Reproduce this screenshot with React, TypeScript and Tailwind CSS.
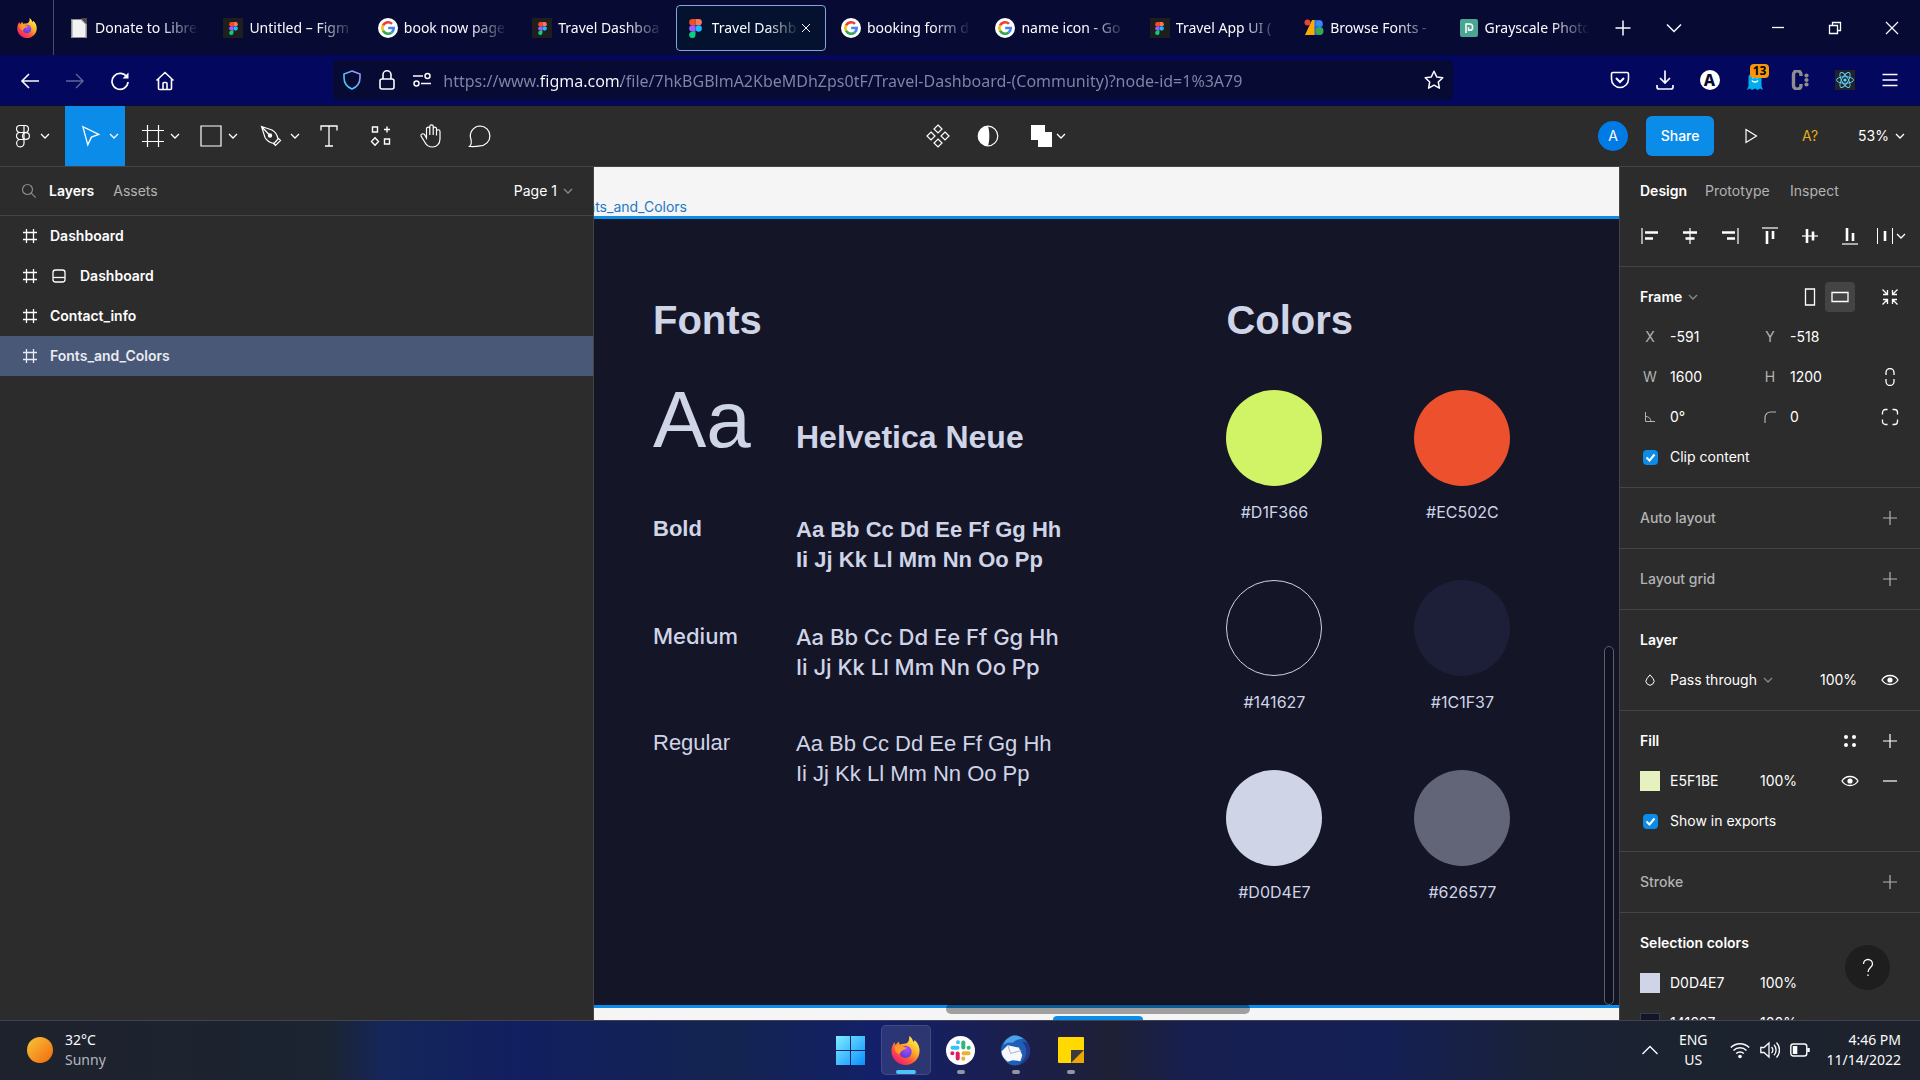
import type { ReactNode } from "react";

type IconProps = { className?: string; children?: ReactNode; box?: number; sw?: number };

function Svg({ className = "size-5", children, box = 20, sw = 1 }: IconProps) {
  return (
    <svg
      viewBox={`0 0 ${box} ${box}`}
      className={`shrink-0 ${className}`}
      fill="none"
      stroke="currentColor"
      strokeWidth={sw}
      aria-hidden="true"
    >
      {children}
    </svg>
  );
}

function Chevron({ className = "" }: { className?: string }) {
  return (
    <svg viewBox="0 0 10 10" className={`size-[10px] shrink-0 ${className}`} fill="none" stroke="currentColor" strokeWidth="1.3" aria-hidden="true">
      <path d="M1 3l4 4 4-4" />
    </svg>
  );
}

/* ---------- brand marks ---------- */

function FirefoxLogo({ className, id }: { className: string; id: string }) {
  return (
    <svg viewBox="0 0 32 32" className={`shrink-0 ${className}`} aria-hidden="true">
      <defs>
        <linearGradient id={`${id}-a`} x1="0.85" y1="0.1" x2="0.2" y2="0.95">
          <stop offset="0" stopColor="#fff04a" />
          <stop offset="0.35" stopColor="#ffb02a" />
          <stop offset="0.65" stopColor="#ff5a36" />
          <stop offset="1" stopColor="#f0187a" />
        </linearGradient>
        <radialGradient id={`${id}-b`} cx="0.6" cy="0.3" r="0.8">
          <stop offset="0" stopColor="#b04cff" />
          <stop offset="1" stopColor="#4a3bd0" />
        </radialGradient>
      </defs>
      <path
        fill={`url(#${id}-a)`}
        d="M20 0c3 2 4 4 4.500 6.500 1-.5 1.500-1 1.500-2C30 8 32 13 31.500 17.500 31 26 24 32 16 32S1 26 .5 17.500C.2 13 1.500 9.500 4 6.500c0 1.500.3 2.300 1 3.200C6.500 8 7.500 7 9 6c-.2 1.500 0 2.500.8 3.300C13 8.500 16 9 18 7.500 19.800 6 20.500 3 20 0z"
      />
      <circle cx="16" cy="17.500" r="6.800" fill={`url(#${id}-b)`} />
      <path fill="#ff9a2a" d="M4 12c3-2.500 7-2.500 9.500-.5 1.500 1 3 .8 4 1.200-.5 1.800-3 2.300-4.500 3-1.500.8-3 2.500-3.500 4.500C6 19 3.500 16 4 12z" />
    </svg>
  );
}

function FigmaLogo({ dark = false }: { dark?: boolean }) {
  return (
    <span className={dark ? "flex size-5 shrink-0 items-center justify-center bg-[#1e1e1e]" : "flex size-5 shrink-0 items-center justify-center"}>
      <svg viewBox="0 0 12 18" className={dark ? "h-[13px] w-[9px]" : "h-[19px] w-[13px]"} aria-hidden="true">
        <path fill="#f24e1e" d="M3 0h3v6H3a3 3 0 010-6z" />
        <path fill="#ff7262" d="M6 0h3a3 3 0 010 6H6z" />
        <path fill="#a259ff" d="M3 6h3v6H3a3 3 0 010-6z" />
        <circle cx="9" cy="9" r="3" fill="#1abcfe" />
        <path fill="#0acf83" d="M3 12h3v3a3 3 0 11-3-3z" />
      </svg>
    </span>
  );
}

function GoogleLogo() {
  return (
    <svg viewBox="0 0 20 20" className="size-5 shrink-0" fill="none" strokeWidth="2.600" aria-hidden="true">
      <circle cx="10" cy="10" r="10" fill="#fff" />
      <path stroke="#ea4335" d="M5 7.300A5.700 5.700 0 0114 5.900" />
      <path stroke="#fbbc05" d="M5 12.700a5.700 5.700 0 010-5.400" />
      <path stroke="#34a853" d="M13.700 14.400A5.700 5.700 0 015 12.700" />
      <path stroke="#4285f4" d="M10.200 10h5.500a5.700 5.700 0 01-2 4.400" />
    </svg>
  );
}

function FileLogo() {
  return (
    <svg viewBox="0 0 20 20" className="size-5 shrink-0" aria-hidden="true">
      <path d="M2 1h11l5 5v14H2z" fill="#8f8f8f" />
      <path d="M3.500 2H12l4.500 4.500V19h-13z" fill="#f2f2f2" />
      <path d="M12 0h6v6z" fill="#4a4a4a" />
    </svg>
  );
}

function FontsLogo() {
  return (
    <svg viewBox="0 0 20 20" className="size-5 shrink-0" aria-hidden="true">
      <path d="M8 2h4v15H1z" fill="#fbab00" />
      <path d="M10.500 2H15a4 4 0 010 8h-4.500z" fill="#1a73e8" />
      <path d="M10.500 9H15a4 4 0 010 8h-4.500z" fill="#1967d2" />
      <circle cx="15.500" cy="13" r="4" fill="#34a853" />
      <circle cx="3.500" cy="4.500" r="3" fill="#ea4335" />
      <circle cx="15" cy="5.500" r="3" fill="#4285f4" />
    </svg>
  );
}

function PhotopeaLogo() {
  return (
    <svg viewBox="0 0 20 20" className="size-5 shrink-0" fill="none" aria-hidden="true">
      <rect x="1" y="1" width="18" height="18" rx="2" fill="#4aa592" />
      <path d="M7 15V6h3.500a3 3 0 010 6.300H9.500v-3" stroke="#fff" strokeWidth="1.500" />
    </svg>
  );
}

/* ---------- browser chrome ---------- */

const tabs: { title: string; icon: ReactNode; active?: boolean }[] = [
  { title: "Donate to Libre", icon: <FileLogo /> },
  { title: "Untitled – Figm", icon: <FigmaLogo dark /> },
  { title: "book now page", icon: <GoogleLogo /> },
  { title: "Travel Dashboa", icon: <FigmaLogo dark /> },
  { title: "Travel Dashb", icon: <FigmaLogo />, active: true },
  { title: "booking form d", icon: <GoogleLogo /> },
  { title: "name icon - Go", icon: <GoogleLogo /> },
  { title: "Travel App UI (", icon: <FigmaLogo dark /> },
  { title: "Browse Fonts -", icon: <FontsLogo /> },
  { title: "Grayscale Photo", icon: <PhotopeaLogo /> },
];

function TabBar() {
  return (
    <div className="flex h-[55px] shrink-0 items-stretch bg-[#070b34]">
      <button aria-label="Pinned tab" className="flex w-[54px] shrink-0 items-center justify-center border-r border-[#4a4d6c]">
        <FirefoxLogo className="size-5" id="ff-tab" />
      </button>
      <div className="grid min-w-0 flex-1 grid-cols-10 items-center pt-px" role="tablist">
        {tabs.map((t, i) =>
          t.active ? (
            <div key={i} className="min-w-0 pl-1">
              <div className="flex h-[46px] items-center rounded border border-[#86a5e0] bg-[#05122f] pl-[9px]">
                <button role="tab" aria-selected="true" className="flex min-w-0 flex-1 items-center gap-[6px] text-left">
                  {t.icon}
                  <span className="flex-1 overflow-hidden text-sm whitespace-nowrap [mask-image:linear-gradient(to_left,transparent,black_34px)]">{t.title}</span>
                </button>
                <button aria-label="Close tab" className="mr-[13px]">
                  <Svg box={12} className="size-3">
                    <path d="M2 2l8 8M10 2l-8 8" />
                  </Svg>
                </button>
              </div>
            </div>
          ) : (
            <button key={i} role="tab" aria-selected="false" className="flex min-w-0 items-center gap-[6px] pr-[9px] pl-[15px] text-left">
              {t.icon}
              <span className="flex-1 overflow-hidden text-sm whitespace-nowrap [mask-image:linear-gradient(to_left,transparent,black_38px)]">{t.title}</span>
            </button>
          ),
        )}
      </div>
      <div className="flex shrink-0 items-center">
        <button aria-label="New tab" className="flex w-[50px] justify-center">
          <Svg className="size-5" sw={1.5}>
            <path d="M10 2.500v15M2.500 10h15" />
          </Svg>
        </button>
        <button aria-label="List all tabs" className="flex w-[51px] justify-center">
          <Svg className="size-5" sw={1.5}>
            <path d="M3 6.500l7 7 7-7" />
          </Svg>
        </button>
        <div className="ml-[50px] flex">
          <button aria-label="Minimize" className="flex w-[57px] justify-center">
            <Svg className="size-4" box={16} sw={1.3}>
              <path d="M2 7.500h12" />
            </Svg>
          </button>
          <button aria-label="Restore" className="flex w-[57px] justify-center">
            <Svg className="size-4" box={16} sw={1.3}>
              <path d="M2.500 5.500h8v8h-8zM5.500 5.500v-3h8v8h-3" />
            </Svg>
          </button>
          <button aria-label="Close window" className="flex w-[57px] justify-center">
            <Svg className="size-4" box={16} sw={1.2}>
              <path d="M2 2l12 12M14 2L2 14" />
            </Svg>
          </button>
        </div>
      </div>
    </div>
  );
}

function NavButton({ label, children, className = "" }: { label: string; children: ReactNode; className?: string }) {
  return (
    <button aria-label={label} className={`flex h-10 w-[45px] items-center justify-center ${className}`}>
      {children}
    </button>
  );
}

function NavBar() {
  return (
    <div className="flex h-[51px] shrink-0 items-center border-b border-[#0c0d2e] bg-[#03075d]">
      <div className="flex flex-[332] items-center pt-px pl-[7px]">
        <NavButton label="Back">
          <Svg sw={1.6}>
            <path d="M19 10H2M9 3l-7 7 7 7" />
          </Svg>
        </NavButton>
        <NavButton label="Forward" className="text-[#63669a]">
          <Svg sw={1.4}>
            <path d="M1 10h17M11 3l7 7-7 7" />
          </Svg>
        </NavButton>
        <NavButton label="Reload">
          <Svg sw={1.7}>
            <path d="M17 6.500A8 8 0 1018 11" />
            <path d="M18.500 1.500v6h-6z" fill="currentColor" stroke="none" />
          </Svg>
        </NavButton>
        <NavButton label="Home">
          <Svg sw={1.6}>
            <path d="M1.500 9.500L10 1.500l8.500 8M3.500 8v9.500a1 1 0 001 1h11a1 1 0 001-1V8M8 18.500V12.500a1 1 0 011-1h2a1 1 0 011 1v6" />
          </Svg>
        </NavButton>
      </div>
      <div className="flex h-10 flex-[1121] items-center rounded-[5px] bg-[#070b34] px-[9px]">
        <button aria-label="Tracking protection" className="mr-[15px]">
          <svg viewBox="0 0 20 20" className="size-5" fill="none" strokeWidth="1.600" aria-hidden="true">
            <defs>
              <linearGradient id="shield" x1="1" y1="0" x2="0" y2="1">
                <stop offset="0" stopColor="#a88bff" />
                <stop offset="1" stopColor="#2cd9ff" />
              </linearGradient>
            </defs>
            <path stroke="url(#shield)" d="M10 1l8 3v3.500c0 5-3 9.500-8 11.500-5-2-8-6.500-8-11.500V4z" />
          </svg>
        </button>
        <button aria-label="Site security" className="mr-[15px]">
          <Svg sw={1.6}>
            <rect x="3" y="9" width="14" height="10" rx="2" />
            <path d="M6 9V4.800a4 4 0 018 0V9" />
          </Svg>
        </button>
        <button aria-label="Permissions" className="mr-[11px]">
          <Svg sw={1.5}>
            <path d="M1 6h10M9 13.500h10" />
            <circle cx="15.500" cy="6" r="2.500" />
            <circle cx="4.500" cy="13.500" r="2.500" />
          </Svg>
        </button>
        <input
          aria-label="Address"
          readOnly
          value="https://www.figma.com/file/7hkBGBlmA2KbeMDhZps0tF/Travel-Dashboard-(Community)?node-id=1%3A79"
          className="min-w-0 flex-1 bg-[linear-gradient(to_right,#8385a6_97px,#fbfbfe_97px,#fbfbfe_178px,#8385a6_178px)] bg-clip-text pt-[2px] text-base text-transparent outline-none"
        />
        <button aria-label="Bookmark">
          <Svg sw={1.5}>
            <path d="M10 1.200l2.700 5.700 6.100.8-4.500 4.300 1.100 6.200L10 15.200l-5.400 3 1.100-6.200L1.200 7.700l6.100-.8z" strokeLinejoin="round" />
          </Svg>
        </button>
      </div>
      <div className="flex flex-[467] justify-end pr-[8px]">
        <NavButton label="Save to Pocket">
          <Svg sw={1.6}>
            <path d="M3 2.500h14a1.500 1.500 0 011.500 1.500v5a8.500 8.500 0 01-17 0V4A1.500 1.500 0 013 2.500z" />
            <path d="M6 8l4 4 4-4" strokeWidth="2" />
          </Svg>
        </NavButton>
        <NavButton label="Downloads">
          <Svg sw={1.7}>
            <path d="M10 0.500v12M5 8l5 5 5-5M2 15v2a2 2 0 002 2h12a2 2 0 002-2v-2" />
          </Svg>
        </NavButton>
        <NavButton label="Account extension">
          <span className="flex size-5 items-center justify-center rounded-full bg-white text-base leading-5 font-extrabold text-[#070b34]">A</span>
        </NavButton>
        <NavButton label="Ghostery" className="relative">
          <svg viewBox="0 0 20 20" className="size-5" aria-hidden="true">
            <path d="M3.500 8a6.500 6.500 0 0113 0v8l1.500 4-3-1.500L13 20l-3-1.500L7 20l-2-1.500L2 20l1.500-4z" fill="#00aef0" />
            <circle cx="8" cy="7.500" r="1" fill="#fff" />
            <circle cx="12" cy="7.500" r="1" fill="#fff" />
            <path d="M7 10.500c1 2 5 2 6 0" stroke="#fff" strokeWidth="1.300" fill="none" />
          </svg>
          <span className="absolute top-1 left-[18px] h-[14px] w-[19px] rounded-sm bg-[#f8960c] text-center text-xs leading-[14px] font-bold text-black">13</span>
        </NavButton>
        <NavButton label="Colour extension" className="text-[#8e8e8e]">
          <svg viewBox="0 0 20 20" className="size-5" fill="currentColor" aria-hidden="true">
            <path d="M11 6V4.500a3.500 3.500 0 00-7.500 0v11a3.500 3.500 0 007.500 0V14" fill="none" stroke="currentColor" strokeWidth="3.400" />
            <circle cx="16.500" cy="5.500" r="2.100" />
            <circle cx="16.500" cy="10" r="2.100" />
            <circle cx="16.500" cy="14.500" r="2.100" />
          </svg>
        </NavButton>
        <NavButton label="React Developer Tools">
          <svg viewBox="0 0 20 20" className="size-5" fill="none" stroke="#61dafb" strokeWidth="0.900" aria-hidden="true">
            <rect width="20" height="20" fill="#20232a" stroke="none" />
            <ellipse cx="10" cy="10" rx="8.500" ry="3.300" />
            <ellipse cx="10" cy="10" rx="8.500" ry="3.300" transform="rotate(60 10 10)" />
            <ellipse cx="10" cy="10" rx="8.500" ry="3.300" transform="rotate(120 10 10)" />
            <circle cx="10" cy="10" r="1.600" fill="#61dafb" stroke="none" />
          </svg>
        </NavButton>
        <NavButton label="Menu">
          <Svg sw={1.5}>
            <path d="M2.500 4.500h15M2.500 10h15M2.500 15.500h15" />
          </Svg>
        </NavButton>
      </div>
    </div>
  );
}

/* ---------- editor toolbar ---------- */

function Toolbar() {
  return (
    <div className="grid h-[61px] shrink-0 grid-cols-[1fr_auto_1fr] items-center border-b border-[#444] bg-[#2c2c2c]">
      <div className="flex h-full items-center">
        <button aria-label="Main menu" className="flex h-full w-[65px] items-center gap-1 pl-3">
          <Svg box={24} className="size-6" sw={1.2}>
            <path d="M8 1.500h4v7H8a3.500 3.500 0 010-7zM12 1.500h1a3.500 3.500 0 010 7h-1zM8 8.500h4v7H8a3.500 3.500 0 010-7zM8 15.500h4v3.500a3.700 3.700 0 11-4-3.500z" />
            <circle cx="14" cy="12" r="3.400" />
          </Svg>
          <Chevron />
        </button>
        <button aria-label="Move tool" className="flex h-full w-[60px] items-center gap-2 bg-[#0c8ce9] pl-[14px]">
          <Svg sw={1.2} className="size-[22px]">
            <path d="M3.500 1.500l4.500 16.500 3.300-7 6.700-2.500z" />
          </Svg>
          <Chevron />
        </button>
        <button aria-label="Frame tool" className="flex h-full w-[60px] items-center gap-[6px] pl-[17px]">
          <Svg box={22} className="size-[22px]" sw={1.2}>
            <path d="M5.500 0v22M16.500 0v22M0 5.500h22M0 16.500h22" />
          </Svg>
          <Chevron />
        </button>
        <button aria-label="Rectangle tool" className="flex h-full w-[60px] items-center gap-[6px] pl-[15px]">
          <Svg box={22} className="size-[22px]" sw={1.2}>
            <path d="M1 1h20v20H1z" />
          </Svg>
          <Chevron />
        </button>
        <button aria-label="Pen tool" className="flex h-full w-[58px] items-center gap-2 pl-[15px]">
          <Svg box={22} className="size-[22px]" sw={1.2}>
            <path d="M1.500 1.500l10.500 3.500c3.500 2 5.500 6 6 9l-4 4.500c-3-.5-7-2.500-9-6zM1.500 1.500l7.500 8M18 13l2.500 2.500-5 5-2.500-2.500" />
            <circle cx="10" cy="10.500" r="1.600" fill="currentColor" />
          </Svg>
          <Chevron />
        </button>
        <button aria-label="Text tool" className="flex h-full w-[52px] items-center justify-center">
          <Svg box={22} className="size-[22px]" sw={1.3}>
            <path d="M3 5.500V1h16v4.500M11 1v20M7 21h8" />
          </Svg>
        </button>
        <button aria-label="Resources" className="flex h-full w-[52px] items-center justify-center">
          <Svg box={22} className="size-[22px]" sw={1.4}>
            <path d="M2.500 2h5v5h-5zM17 1.500v6M14 4.500h6M14.500 14h5v5h-5zM5 12.800l3.500 3.700L5 20.200l-3.500-3.700z" />
          </Svg>
        </button>
        <button aria-label="Hand tool" className="flex h-full w-[48px] items-center justify-center">
          <Svg box={24} className="size-6" sw={1.2}>
            <path d="M7.500 14V4.500a1.700 1.700 0 013.300 0V2.500a1.700 1.700 0 013.400 0v2a1.700 1.700 0 013.300 0v3a1.700 1.700 0 013.500 0V15c0 5-3.500 8-7.500 8-3.500 0-6-1.500-7.500-4.500l-4-6.500c-.5-2 2-3 3.500-1.500zM10.800 4.500V11M14.200 4.500V11M17.500 7v4.500" />
          </Svg>
        </button>
        <button aria-label="Comment tool" className="flex h-full w-[50px] items-center justify-center">
          <Svg box={24} className="size-6" sw={1.2}>
            <path d="M1.500 22.500c2-2 2-5 1.500-7A10 10 0 0112 2a9.800 9.800 0 010 19.800c-4 1-8 .7-10.500.7z" />
          </Svg>
        </button>
      </div>
      <div className="flex items-center pl-[76px]">
        <button aria-label="Create component" className="flex w-[50px] justify-center">
          <Svg box={24} className="size-6" sw={1.2}>
            <path d="M12 1l4 4-4 4-4-4zM12 15l4 4-4 4-4-4zM5 8l4 4-4 4-4-4zM19 8l4 4-4 4-4-4z" />
          </Svg>
        </button>
        <button aria-label="Use as mask" className="flex w-[50px] justify-center">
          <Svg box={22} className="size-[22px]" sw={1.2}>
            <circle cx="11" cy="11" r="9.800" />
            <path d="M11 1.200a9.800 9.800 0 000 19.600c1.800-5 1.800-14.600 0-19.600z" fill="currentColor" stroke="none" />
          </Svg>
        </button>
        <button aria-label="Union selection" className="flex w-[70px] items-center justify-center gap-1">
          <Svg box={22} className="size-[22px]">
            <path d="M1 0h14v7h7v15H8v-7H1z" fill="currentColor" stroke="none" />
          </Svg>
          <Chevron />
        </button>
      </div>
      <div className="flex items-center justify-end">
        <span className="mr-[18px] flex size-[30px] items-center justify-center rounded-full bg-[#007be5] text-sm">A</span>
        <button className="h-10 w-[68px] rounded-md bg-[#0c8ce9] text-sm font-medium">Share</button>
        <button aria-label="Present" className="flex w-[74px] justify-center">
          <Svg box={16} className="size-4" sw={1.2}>
            <path d="M3 1.500l10.500 6.500L3 14.500z" />
          </Svg>
        </button>
        <button className="w-[44px] text-sm text-[#e0ac17]">A?</button>
        <button className="ml-[26px] flex items-center gap-[6px] pr-[15px] text-sm">
          53% <Chevron />
        </button>
      </div>
    </div>
  );
}

/* ---------- layers panel ---------- */

function HashIcon() {
  return (
    <Svg box={16} className="size-4" sw={1.3}>
      <path d="M4.500 1v14M11.500 1v14M1 4.500h14M1 11.500h14" />
    </Svg>
  );
}

const layers = [
  { name: "Dashboard" },
  { name: "Dashboard", sticky: true },
  { name: "Contact_info" },
  { name: "Fonts_and_Colors", selected: true },
];

function LayersPanel() {
  return (
    <aside className="w-[594px] shrink-0 border-r border-[#444]">
      <div className="flex h-[49px] items-center border-b border-[#444] pr-5 pl-[21px] text-sm">
        <button aria-label="Search" className="mr-3 text-[#8a8a8a]">
          <Svg box={16} className="size-4" sw={1.2}>
            <circle cx="6.500" cy="6.500" r="5" />
            <path d="M10.200 10.200l4.500 4.500" />
          </Svg>
        </button>
        <button className="font-semibold text-white">Layers</button>
        <button className="ml-[19px] text-[#b3b3b3]">Assets</button>
        <button className="ml-auto flex items-center gap-[6px]">
          Page 1 <Chevron className="text-[#8a8a8a]" />
        </button>
      </div>
      <ul>
        {layers.map((l, i) => (
          <li
            key={i}
            className={
              l.selected
                ? "flex h-10 items-center gap-3 bg-[#4a5878] pl-[22px] text-sm font-semibold text-[#e8ebf2]"
                : "flex h-10 items-center gap-3 pl-[22px] text-sm font-semibold text-white"
            }
          >
            <HashIcon />
            {l.sticky && (
              <Svg box={18} className="size-[18px]" sw={1.3}>
                <rect x="3" y="3" width="12" height="12" rx="2.500" />
                <path d="M3 10.500h12" />
              </Svg>
            )}
            {l.name}
          </li>
        ))}
      </ul>
    </aside>
  );
}

/* ---------- canvas ---------- */

const alphabet = ["Aa Bb Cc Dd Ee Ff Gg Hh", "Ii Jj Kk Ll Mm Nn Oo Pp"];
const weights = [
  { name: "Bold", cls: "font-['Liberation_Sans',sans-serif] font-bold" },
  { name: "Medium", cls: "font-[Inter,sans-serif] font-medium" },
  { name: "Regular", cls: "font-['Liberation_Sans',sans-serif]" },
];
const swatches = [
  { hex: "#D1F366", cls: "bg-[#d1f366]" },
  { hex: "#EC502C", cls: "bg-[#ec502c]" },
  { hex: "#141627", cls: "border border-[#d0d4e7] bg-[#141627]" },
  { hex: "#1C1F37", cls: "bg-[#1c1f37]" },
  { hex: "#D0D4E7", cls: "bg-[#d0d4e7]" },
  { hex: "#626577", cls: "bg-[#626577]" },
];

function Canvas() {
  return (
    <main className="relative flex min-w-0 flex-1 flex-col overflow-hidden bg-[#f5f5f5]">
      <div className="flex h-[49px] w-[93px] shrink-0 items-end justify-end pb-px text-sm leading-[16px] text-[#1b78c8]">Fonts_and_Colors</div>
      <div className="flex min-h-0 flex-1 overflow-hidden border-y-[3px] border-[#0c8ce9] bg-[#141627] pl-[59px] font-['Liberation_Sans',sans-serif] text-[#d0d4e7]">
        <section className="flex-[574] pt-[77px]">
          <h1 className="text-[40px] leading-[48px] font-bold">Fonts</h1>
          <div className="mt-[30px] flex h-[92px] items-end">
            <div className="w-[143px] text-[80px] leading-[92px]">Aa</div>
            <div className="pb-[9px] text-[32px] leading-[40px] font-bold">Helvetica Neue</div>
          </div>
          <div className="pt-12 text-[22px] leading-[30px]">
            {weights.map((w) => (
              <div key={w.name} className={`flex h-[107px] items-start ${w.cls}`}>
                <div className="w-[143px]">{w.name}</div>
                <div className="pt-px">
                  {alphabet.map((line) => (
                    <div key={line}>{line}</div>
                  ))}
                </div>
              </div>
            ))}
          </div>
        </section>
        <section className="flex-[393] pt-[77px]">
          <h1 className="text-[40px] leading-[48px] font-bold">Colors</h1>
          <div className="mt-[46px] grid w-[284px] grid-cols-[96px_96px] justify-between gap-y-[58px]">
            {swatches.map((s) => (
              <div key={s.hex} className="flex flex-col items-center gap-4 font-[Inter,sans-serif] text-base leading-[20px]">
                <div className={`size-24 rounded-full ${s.cls}`} />
                {s.hex}
              </div>
            ))}
          </div>
        </section>
      </div>
      <div className="h-3 shrink-0" />
      <div className="absolute right-[5px] bottom-[15px] h-[359px] w-[10px] rounded-full border border-[#5d5e6c] bg-[#101120]" />
      <div className="absolute bottom-[6px] left-[352px] h-[10px] w-[304px] rounded-full bg-black/35" />
      <div className="absolute bottom-0 left-[459px] h-1 w-[90px] rounded-t bg-[#0c8ce9]" />
    </main>
  );
}

/* ---------- properties panel ---------- */

function Section({ children, last = false }: { children: ReactNode; last?: boolean }) {
  return <section className={last ? "py-[10px]" : "border-b border-[#444] py-[10px]"}>{children}</section>;
}

function Row({ children }: { children: ReactNode }) {
  return <div className="flex h-10 items-center">{children}</div>;
}

function IconButton({ label, children, className = "" }: { label: string; children: ReactNode; className?: string }) {
  return (
    <button aria-label={label} className={`flex size-10 shrink-0 items-center justify-center ${className}`}>
      {children}
    </button>
  );
}

function Plus() {
  return (
    <Svg box={16} className="size-4" sw={1.2}>
      <path d="M8 1v14M1 8h14" />
    </Svg>
  );
}

function Eye() {
  return (
    <Svg box={18} className="size-[18px]" sw={1.3}>
      <path d="M1 9c3.500-6 12.500-6 16 0-3.500 6-12.500 6-16 0z" />
      <circle cx="9" cy="9" r="2.600" fill="currentColor" stroke="none" />
    </Svg>
  );
}

function Field({ label, name, value }: { label: ReactNode; name: string; value: string }) {
  return (
    <label className="flex w-[120px] items-center">
      <span className="flex w-5 justify-center text-[#b3b3b3]">{label}</span>
      <input aria-label={name} defaultValue={value} className="ml-[10px] w-[80px] bg-transparent outline-none" />
    </label>
  );
}

function CheckRow({ label }: { label: string }) {
  return (
    <Row>
      <label className="flex items-center gap-3">
        <span className="relative ml-[3px] block size-[15px]">
          <input type="checkbox" defaultChecked className="block size-[15px] appearance-none rounded-sm bg-[#0c8ce9]" />
          <svg viewBox="0 0 15 15" className="pointer-events-none absolute inset-0 size-[15px]" fill="none" stroke="#fff" strokeWidth="2" aria-hidden="true">
            <path d="M3.500 7.500l3 3 5-6" />
          </svg>
        </span>
        {label}
      </label>
    </Row>
  );
}

function ColorFields({ hex, swatch }: { hex: string; swatch: string }) {
  return (
    <>
      <span className={`size-5 shrink-0 ${swatch}`} />
      <input aria-label={`Color ${hex}`} defaultValue={hex} className="ml-[10px] w-[90px] bg-transparent outline-none" />
      <input aria-label={`Opacity of ${hex}`} defaultValue="100%" className="w-[70px] bg-transparent outline-none" />
    </>
  );
}

const alignIcons: { name: string; d: string; rail: string }[] = [
  { name: "Align left", rail: "M1 1v16", d: "M4 5.500h13M4 11.500h8" },
  { name: "Align horizontal centers", rail: "M9 1v16", d: "M2 5.500h14M4.500 11.500h9" },
  { name: "Align right", rail: "M17 1v16", d: "M1 5.500h13M6 11.500h8" },
  { name: "Align top", rail: "M1 1h16", d: "M6 4v13M12 4v8" },
  { name: "Align vertical centers", rail: "M1 9h16", d: "M6 2v14M12 4.500v9" },
  { name: "Align bottom", rail: "M1 17h16", d: "M6 1v13M12 6v8" },
];

function PropertiesPanel() {
  return (
    <aside className="relative w-[301px] shrink-0 overflow-hidden border-l border-[#444] text-sm">
      <div className="border-b border-[#444] pb-[10px]">
        <div className="flex h-[49px] items-center pb-px pl-5 text-[#b3b3b3]">
          <button className="w-[65px] text-left font-semibold text-white">Design</button>
          <button className="w-[85px] text-left">Prototype</button>
          <button>Inspect</button>
        </div>
        <div className="flex h-10 items-center pl-[10px]">
          {alignIcons.map((a) => (
            <IconButton key={a.name} label={a.name}>
              <Svg box={18} className="size-[18px]">
                <path d={a.rail} strokeWidth="1.200" />
                <path d={a.d} strokeWidth="2.600" />
              </Svg>
            </IconButton>
          ))}
          <button aria-label="Tidy up" className="flex items-center gap-[2px] pl-[6px]">
            <Svg box={18} className="size-[18px]">
              <path d="M1.500 1v16M16.500 1v16" />
              <path d="M9 4v10" strokeWidth="2.600" />
            </Svg>
            <Chevron />
          </button>
        </div>
      </div>

      <Section>
        <div className="pr-[10px] pl-5">
          <Row>
            <button className="flex items-center gap-[6px] font-semibold">
              Frame <Chevron className="text-[#8a8a8a]" />
            </button>
            <button aria-label="Portrait" className="ml-auto flex size-[30px] items-center justify-center">
              <Svg box={18} className="size-[18px]" sw={1.3}>
                <path d="M4.500 1h9v16h-9z" />
              </Svg>
            </button>
            <button aria-label="Landscape" className="mr-[15px] flex size-[30px] items-center justify-center rounded-sm bg-[#444]">
              <Svg box={18} className="size-[18px]" sw={1.3}>
                <path d="M1 4.500h16v9H1z" />
              </Svg>
            </button>
            <IconButton label="Resize to fit">
              <Svg box={18} className="size-[18px]" sw={1.3}>
                <path d="M1.500 1.500l4.500 4.500M6.500 2v4.500H2M16.500 1.500L12 6M11.500 2v4.500H16M1.500 16.500L6 12M6.500 16v-4.500H2M16.500 16.500L12 12M11.500 16v-4.500H16" />
              </Svg>
            </IconButton>
          </Row>
          <Row>
            <Field label="X" name="X position" value="-591" />
            <Field label="Y" name="Y position" value="-518" />
          </Row>
          <Row>
            <Field label="W" name="Width" value="1600" />
            <Field label="H" name="Height" value="1200" />
            <IconButton label="Constrain proportions" className="-ml-[10px]">
              <Svg box={18} className="size-[18px]" sw={1.3}>
                <path d="M5 7V4.500a4 4 0 018 0V7M5 11v2.500a4 4 0 008 0V11" />
              </Svg>
            </IconButton>
          </Row>
          <Row>
            <Field
              name="Rotation"
              value="0°"
              label={
                <Svg box={12} className="size-3">
                  <path d="M1.500 1v9.500h9.500M2 5.500a5 5 0 015 5" />
                </Svg>
              }
            />
            <Field
              name="Corner radius"
              value="0"
              label={
                <Svg box={12} className="size-3" sw={1.2}>
                  <path d="M1 12V6.500A5.500 5.500 0 016.500 1H12" />
                </Svg>
              }
            />
            <IconButton label="Independent corners" className="-ml-[10px]">
              <Svg box={18} className="size-[18px]" sw={1.3}>
                <path d="M1.500 6.500V4.500a3 3 0 013-3h2M11.500 1.500h2a3 3 0 013 3v2M16.500 11.500v2a3 3 0 01-3 3h-2M6.500 16.500h-2a3 3 0 01-3-3v-2" />
              </Svg>
            </IconButton>
          </Row>
          <CheckRow label="Clip content" />
        </div>
      </Section>

      {["Auto layout", "Layout grid"].map((name) => (
        <Section key={name}>
          <div className="flex h-10 items-center justify-between pr-[10px] pl-5 text-[#b3b3b3]">
            <h2 className="font-medium">{name}</h2>
            <IconButton label={`Add ${name}`}>
              <Plus />
            </IconButton>
          </div>
        </Section>
      ))}

      <Section>
        <div className="pr-[10px] pl-5">
          <Row>
            <h2 className="font-semibold">Layer</h2>
          </Row>
          <Row>
            <span className="flex w-5 justify-center">
              <Svg box={12} className="size-3">
                <path d="M6 .8l3 3.700a4 4 0 11-6 0z" />
              </Svg>
            </span>
            <button className="ml-[10px] flex items-center gap-[6px]">
              Pass through <Chevron className="text-[#8a8a8a]" />
            </button>
            <input aria-label="Layer opacity" defaultValue="100%" className="ml-auto w-[50px] bg-transparent outline-none" />
            <IconButton label="Toggle visibility">
              <Eye />
            </IconButton>
          </Row>
        </div>
      </Section>

      <Section>
        <div className="pr-[10px] pl-5">
          <Row>
            <h2 className="font-semibold">Fill</h2>
            <IconButton label="Styles" className="ml-auto">
              <Svg box={12} className="size-3">
                <g fill="currentColor" stroke="none">
                  <circle cx="2" cy="2" r="2" />
                  <circle cx="10" cy="2" r="2" />
                  <circle cx="2" cy="10" r="2" />
                  <circle cx="10" cy="10" r="2" />
                </g>
              </Svg>
            </IconButton>
            <IconButton label="Add fill">
              <Plus />
            </IconButton>
          </Row>
          <Row>
            <ColorFields hex="E5F1BE" swatch="bg-[#e5f1be]" />
            <IconButton label="Hide fill">
              <Eye />
            </IconButton>
            <IconButton label="Remove fill">
              <Svg box={16} className="size-4" sw={1.2}>
                <path d="M1 8h14" />
              </Svg>
            </IconButton>
          </Row>
          <CheckRow label="Show in exports" />
        </div>
      </Section>

      <Section>
        <div className="flex h-10 items-center justify-between pr-[10px] pl-5 text-[#b3b3b3]">
          <h2 className="font-medium">Stroke</h2>
          <IconButton label="Add stroke">
            <Plus />
          </IconButton>
        </div>
      </Section>

      <Section last>
        <div className="pr-[10px] pl-5">
          <Row>
            <h2 className="font-semibold">Selection colors</h2>
          </Row>
          <Row>
            <ColorFields hex="D0D4E7" swatch="bg-[#d0d4e7]" />
          </Row>
          <Row>
            <ColorFields hex="141627" swatch="border border-[#3a3b4c] bg-[#141627]" />
          </Row>
        </div>
      </Section>

      <button aria-label="Help" className="absolute right-[30px] bottom-[30px] flex size-[45px] items-center justify-center rounded-full bg-[#1e1e1e]">
        <Svg box={20} className="size-5" sw={1.3}>
          <path d="M5.500 6a4.500 4.500 0 119 0c0 3.500-4.500 3.500-4.500 8M10 16.500v1.500" />
        </Svg>
      </button>
    </aside>
  );
}

/* ---------- taskbar ---------- */

function TaskIcon({ label, children, active = false }: { label: string; children: ReactNode; active?: boolean }) {
  return (
    <button
      aria-label={label}
      className={
        active
          ? "relative flex size-[50px] items-center justify-center rounded-[5px] border border-white/10 bg-white/10"
          : "relative flex size-[50px] items-center justify-center"
      }
    >
      {children}
      {label !== "Start" && (
        <span className={active ? "absolute bottom-0 h-1 w-5 rounded-full bg-[#4cc2ff]" : "absolute bottom-px h-1 w-2 rounded-full bg-[#9295a8]"} />
      )}
    </button>
  );
}

function Taskbar() {
  return (
    <footer className="grid h-[60px] shrink-0 grid-cols-[1fr_auto_1fr] items-center border-t border-[#414350] bg-[linear-gradient(to_right,#1e222d_0%,#1c2431_17%,#14265a_20%,#121f60_27%,#132450_38%,#13206a_46%,#1a1f50_52%,#1e2035_58%,#171f50_62%,#141f55_72%,#1a2238_80%,#1b232f_88%,#1e222c_100%)] pb-px font-['Noto_Sans',sans-serif] text-sm leading-5">
      <button className="flex items-center gap-3 justify-self-start pl-[27px] text-left">
        <span className="size-[26px] rounded-full bg-linear-to-br from-[#f5c536] to-[#f0650c]" />
        <span>
          <span className="block">32°C</span>
          <span className="block text-[#b4b7c0]">Sunny</span>
        </span>
      </button>
      <div className="flex gap-[5px] pl-px">
        <TaskIcon label="Start">
          <svg viewBox="0 0 29 29" className="size-[29px]" aria-hidden="true">
            <defs>
              <linearGradient id="win" x1="0" y1="0" x2="29" y2="29" gradientUnits="userSpaceOnUse">
                <stop offset="0" stopColor="#7eecff" />
                <stop offset="1" stopColor="#0a90ff" />
              </linearGradient>
            </defs>
            <path fill="url(#win)" d="M0 0h14v14H0zM15 0h14v14H15zM0 15h14v14H0zM15 15h14v14H15z" />
          </svg>
        </TaskIcon>
        <TaskIcon label="Firefox" active>
          <FirefoxLogo className="size-[29px]" id="ff-task" />
        </TaskIcon>
        <TaskIcon label="Slack">
          <svg viewBox="0 0 29 29" className="size-[29px]" aria-hidden="true">
            <circle cx="14.500" cy="14.500" r="14.500" fill="#fff" />
            <g strokeWidth="4" strokeLinecap="round">
              <path stroke="#36c5f0" d="M6.500 11.700h5M12 6.200v.1" />
              <path stroke="#2eb67d" d="M17.300 6.500v5M22.700 11.700h-.1" />
              <path stroke="#ecb22e" d="M17.500 17.300h5M17.300 22.700v-.1" />
              <path stroke="#e01e5a" d="M11.700 17.500v5M6.300 17.300h.1" />
            </g>
          </svg>
        </TaskIcon>
        <TaskIcon label="Thunderbird">
          <svg viewBox="0 0 32 32" className="size-[31px]" aria-hidden="true">
            <path fill="#1d5fb4" d="M10 2C18-2 27 3 30 11c3 9-2 18-11 20-5 1-10 0-13-4L2 22C-1 14 2 6 10 2z" />
            <path fill="#4aa3e6" d="M10 2c5-3 11-1 14 2-5 0-8 1-11 4C9 7 6 8 3.500 11 4.500 7 6 4 10 2z" />
            <path fill="#27358c" d="M23 7c6 6 5 16-1 21l-3 3c9-2 14-11 11-20-1-3-4-4-7-4z" />
            <path fill="#f7f8fc" d="M1.500 17L8 10.500 19.500 13l3.500 8-2 6-8-1-5 1.500C4 25 2 21 1.500 17z" />
            <path d="M8 10.500l3 8.500 11-3" fill="none" stroke="#aab2c6" />
          </svg>
        </TaskIcon>
        <TaskIcon label="Sticky Notes">
          <svg viewBox="0 0 26 26" className="size-[26px]" aria-hidden="true">
            <rect width="26" height="26" rx="1" fill="#ffd900" />
            <path d="M13 26h12a1 1 0 001-1V13z" fill="#f0a500" />
            <path d="M13 13h13L13 26z" fill="#3b3b3b" />
          </svg>
        </TaskIcon>
      </div>
      <div className="flex items-center justify-end pr-[19px]">
        <button aria-label="Show hidden icons" className="mr-5">
          <Svg box={18} className="size-[18px]" sw={1.4}>
            <path d="M1.500 13L9 5.500l7.500 7.500" />
          </Svg>
        </button>
        <button className="mr-[22px] text-center">
          <span className="block">ENG</span>
          <span className="block">US</span>
        </button>
        <button aria-label="Network, volume and battery" className="mr-[17px] flex gap-[10px]">
          <Svg className="size-5" sw={1.5}>
            <path d="M.8 7.500a13 13 0 0118.400 0M3.500 10.500a9.300 9.300 0 0113 0M6.200 13.500a5.400 5.400 0 017.600 0" />
            <circle cx="10" cy="16.500" r="1.800" fill="currentColor" stroke="none" />
          </Svg>
          <Svg className="size-5" sw={1.3}>
            <path d="M.8 7.500H4L9 3v14l-5-4.500H.8zM11.500 7a4 4 0 010 6M14 4.800a7.500 7.500 0 010 10.400M16.500 2.500a11 11 0 010 15" />
          </Svg>
          <Svg className="size-5" sw={1.4}>
            <rect x="0.800" y="4" width="16" height="12" rx="2.500" />
            <rect x="2.800" y="6" width="4.500" height="8" fill="currentColor" stroke="none" />
            <path d="M18.500 8v4" strokeWidth="2.500" />
          </Svg>
        </button>
        <button className="text-right">
          <span className="block">4:46 PM</span>
          <span className="block">11/14/2022</span>
        </button>
      </div>
    </footer>
  );
}

export default function App() {
  return (
    <div className="flex h-screen flex-col overflow-hidden text-[#fbfbfe]">
      <header className="shrink-0 font-['Noto_Sans',sans-serif]">
        <TabBar />
        <NavBar />
      </header>
      <div className="flex min-h-0 flex-1 flex-col bg-[#2c2c2c] font-[Inter,sans-serif] text-white">
        <Toolbar />
        <div className="flex min-h-0 flex-1">
          <LayersPanel />
          <Canvas />
          <PropertiesPanel />
        </div>
      </div>
      <Taskbar />
    </div>
  );
}
